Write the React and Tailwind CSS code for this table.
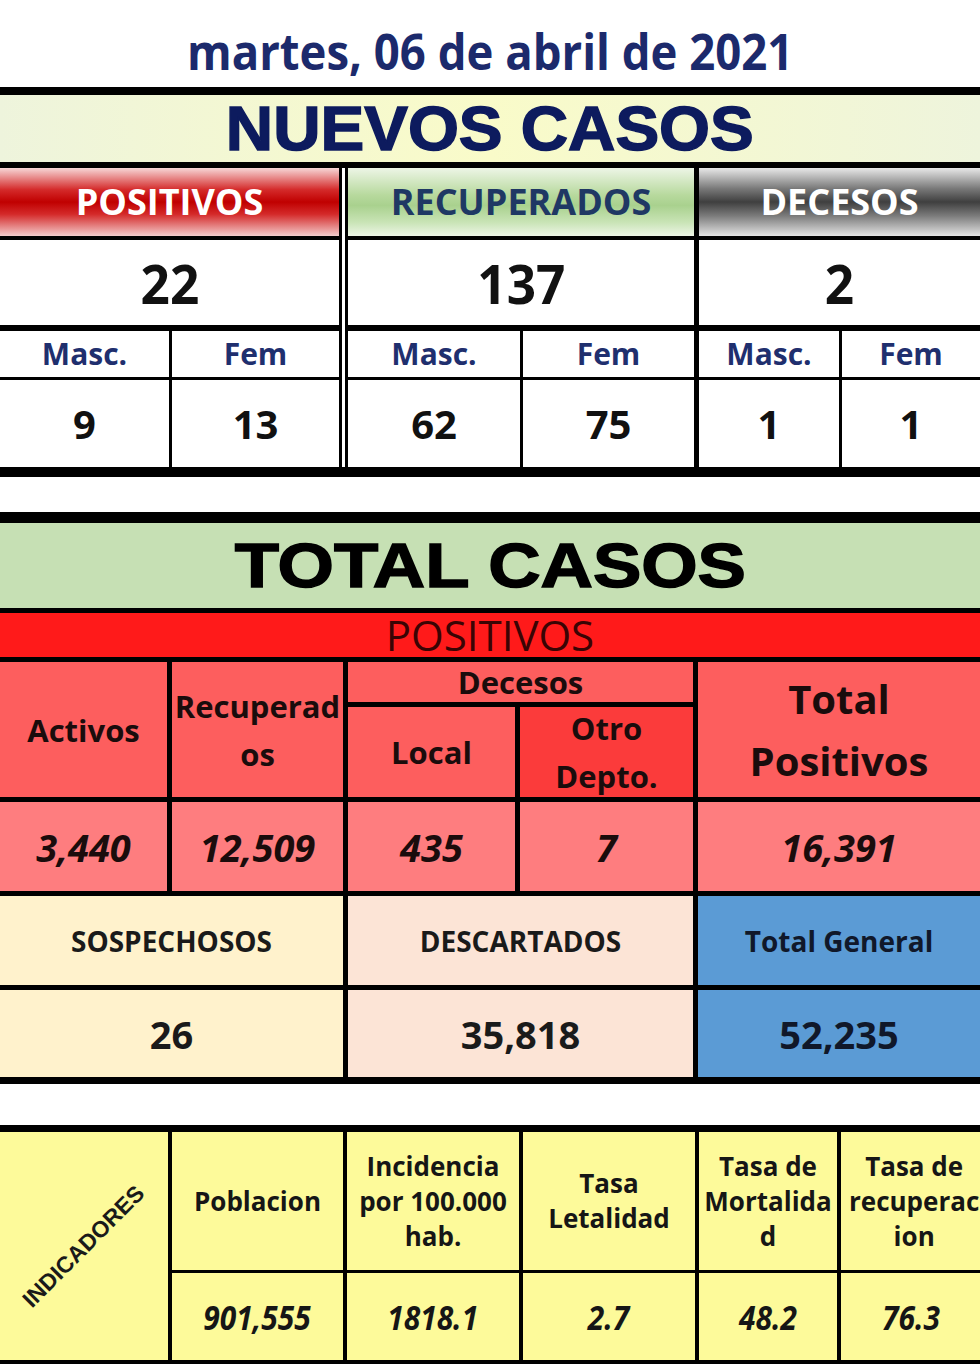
const Cell = ({ className = "", children }) => (
  <div className={`flex items-center justify-center text-center ${className}`}>{children}</div>
);

function NewGroup({ width, cols, head, headBg, headText, total, a, b }) {
  return (
    <div className={`flex flex-col ${width}`}>
      <Cell className={`h-[68px] ${headBg}`}>
        <span className={`text-[36px] font-bold leading-none ${headText}`}>{head}</span>
      </Cell>
      <Cell className="mt-[4px] h-[85px] bg-white">
        <span className="inline-block text-[54px] font-bold leading-none text-[#111] scale-x-[0.95]">{total}</span>
      </Cell>
      <div className={`mt-[6px] grid h-[46px] gap-x-[3px] ${cols}`}>
        <Cell className="bg-white">
          <span className="text-[30px] font-bold leading-none text-[#1f2f6e]">Masc.</span>
        </Cell>
        <Cell className="bg-white">
          <span className="text-[30px] font-bold leading-none text-[#1f2f6e]">Fem</span>
        </Cell>
      </div>
      <div className={`mt-[3px] grid h-[87px] gap-x-[3px] ${cols}`}>
        <Cell className="bg-white">
          <span className="text-[40px] font-bold leading-none text-[#111]">{a}</span>
        </Cell>
        <Cell className="bg-white">
          <span className="text-[40px] font-bold leading-none text-[#111]">{b}</span>
        </Cell>
      </div>
    </div>
  );
}

const redHead = "text-[31px] font-bold leading-[48px] text-[#1a0c0c]";
const redVal = "text-[38px] font-bold italic leading-none text-[#1a0c0c]";
const ind = "text-[26px] font-bold leading-[35px] text-[#161616]";
const indVal = "inline-block text-[34px] font-bold italic leading-none text-[#161616] scale-x-[0.88]";

export default function App() {
  return (
    <div className="h-[1364px] w-[980px] overflow-hidden bg-white font-['Open_Sans',sans-serif]">
      {/* date */}
      <div className="flex h-[87px] items-center justify-center pt-[14px]">
        <span className="inline-block scale-x-[0.91] text-[50px] font-bold leading-none text-[#1c2a6c]">
          martes, 06 de abril de 2021
        </span>
      </div>

      {/* nuevos casos */}
      <div className="bg-black pb-[10px] pt-[8px]">
        <Cell className="h-[67px] bg-[linear-gradient(to_right,#eef4dc,#f9fbc9_50%,#eef4dc)]">
          <span className="inline-block scale-x-[1.04] font-['Liberation_Sans',sans-serif] text-[63px] font-bold leading-none text-[#0d1b5e] [-webkit-text-stroke:1.5px_#0d1b5e]">
            NUEVOS CASOS
          </span>
        </Cell>
        <div className="mt-[6px] flex">
          <NewGroup
            width="w-[339px]"
            cols="grid-cols-[169px_1fr]"
            head="POSITIVOS"
            headBg="bg-[linear-gradient(to_bottom,#f7d6d6_0%,#d42a2a_32%,#c00000_50%,#d42a2a_68%,#f3cccc_100%)]"
            headText="text-white"
            total="22"
            a="9"
            b="13"
          />
          <div className="w-[9px] border-x-[3px] border-black bg-white" />
          <NewGroup
            width="w-[346px]"
            cols="grid-cols-[172px_1fr]"
            head="RECUPERADOS"
            headBg="bg-[linear-gradient(to_bottom,#edf5e6_0%,#b7d99d_40%,#a9d18e_55%,#c9e4b6_80%,#edf5e6_100%)]"
            headText="text-[#1f3864]"
            total="137"
            a="62"
            b="75"
          />
          <div className="w-[5px]" />
          <NewGroup
            width="flex-1"
            cols="grid-cols-[140px_1fr]"
            head="DECESOS"
            headBg="bg-[linear-gradient(to_bottom,#e8e8e8_0%,#7a7a7a_30%,#3f3f3f_50%,#7a7a7a_70%,#e4e4e4_100%)]"
            headText="text-white"
            total="2"
            a="1"
            b="1"
          />
        </div>
      </div>

      {/* total casos */}
      <div className="mt-[35px] bg-black pb-[7px] pt-[11px]">
        <Cell className="h-[85px] bg-[#c6e0b4]">
          <span className="inline-block scale-x-[1.15] font-['Liberation_Sans',sans-serif] text-[63px] font-bold leading-none text-black [-webkit-text-stroke:1.5px_#000]">
            TOTAL CASOS
          </span>
        </Cell>
        <Cell className="mt-[5px] h-[44px] bg-[#ff1a1a]">
          <span className="text-[42px] leading-none text-[#3a0404]">POSITIVOS</span>
        </Cell>
        <div className="mt-[5px] grid grid-cols-[167px_171px_167px_173px_1fr] grid-rows-[40px_90px_89px_89px_87px] gap-x-[5px] gap-y-[5px]">
          <Cell className="row-span-2 bg-[#fd5e5e]">
            <span className={redHead}>Activos</span>
          </Cell>
          <Cell className="row-span-2 bg-[#fd5e5e]">
            <span className={redHead}>
              Recuperad
              <br />
              os
            </span>
          </Cell>
          <Cell className="col-span-2 bg-[#fd5e5e]">
            <span className="text-[31px] font-bold leading-none text-[#1a0c0c]">Decesos</span>
          </Cell>
          <Cell className="row-span-2 bg-[#fd5e5e]">
            <span className="text-[40px] font-bold leading-[62px] text-[#1a0c0c]">
              Total
              <br />
              Positivos
            </span>
          </Cell>
          <Cell className="bg-[#fd5e5e]">
            <span className={redHead}>Local</span>
          </Cell>
          <Cell className="bg-[#fb3b3b]">
            <span className={redHead}>
              Otro
              <br />
              Depto.
            </span>
          </Cell>

          <Cell className="bg-[#fe7d7f]">
            <span className={redVal}>3,440</span>
          </Cell>
          <Cell className="bg-[#fe7d7f]">
            <span className={redVal}>12,509</span>
          </Cell>
          <Cell className="bg-[#fe7d7f]">
            <span className={redVal}>435</span>
          </Cell>
          <Cell className="bg-[#fe7d7f]">
            <span className={redVal}>7</span>
          </Cell>
          <Cell className="bg-[#fe7d7f]">
            <span className={redVal}>16,391</span>
          </Cell>

          <Cell className="col-span-2 bg-[#fff2cc]">
            <span className="text-[28px] font-bold leading-none text-[#1a1a1a]">SOSPECHOSOS</span>
          </Cell>
          <Cell className="col-span-2 bg-[#fce4d6]">
            <span className="text-[28px] font-bold leading-none text-[#1a1a1a]">DESCARTADOS</span>
          </Cell>
          <Cell className="bg-[#5b9bd5]">
            <span className="text-[28px] font-bold leading-none text-[#10182a]">Total General</span>
          </Cell>

          <Cell className="col-span-2 bg-[#fff2cc]">
            <span className="text-[38px] font-bold leading-none text-[#1a1a1a]">26</span>
          </Cell>
          <Cell className="col-span-2 bg-[#fce4d6]">
            <span className="text-[38px] font-bold leading-none text-[#1a1a1a]">35,818</span>
          </Cell>
          <Cell className="bg-[#5b9bd5]">
            <span className="text-[38px] font-bold leading-none text-[#10182a]">52,235</span>
          </Cell>
        </div>
      </div>

      {/* indicadores */}
      <div className="mt-[41px] bg-black pb-[4px] pt-[7px]">
        <div className="grid grid-cols-[168px_171px_172px_172px_138px_1fr] grid-rows-[138px_87px] gap-x-[4px] gap-y-[3px]">
          <Cell className="row-span-2 bg-[#fdfa9a]">
            <span className="inline-block -rotate-45 font-['Liberation_Sans',sans-serif] text-[23px] font-bold leading-none text-[#1a1a1a]">
              INDICADORES
            </span>
          </Cell>
          <Cell className="bg-[#fdfa9a]">
            <span className={ind}>Poblacion</span>
          </Cell>
          <Cell className="bg-[#fdfa9a]">
            <span className={ind}>
              Incidencia
              <br />
              por 100.000
              <br />
              hab.
            </span>
          </Cell>
          <Cell className="bg-[#fdfa9a]">
            <span className={ind}>
              Tasa
              <br />
              Letalidad
            </span>
          </Cell>
          <Cell className="bg-[#fdfa9a]">
            <span className={ind}>
              Tasa de
              <br />
              Mortalida
              <br />d
            </span>
          </Cell>
          <Cell className="justify-start overflow-hidden bg-[#fdfa9a] pl-[8px]">
            <span className={`${ind} whitespace-nowrap`}>
              Tasa de
              <br />
              recuperac
              <br />
              ion
            </span>
          </Cell>

          <Cell className="bg-[#fdfa9a]">
            <span className={indVal}>901,555</span>
          </Cell>
          <Cell className="bg-[#fdfa9a]">
            <span className={indVal}>1818.1</span>
          </Cell>
          <Cell className="bg-[#fdfa9a]">
            <span className={indVal}>2.7</span>
          </Cell>
          <Cell className="bg-[#fdfa9a]">
            <span className={indVal}>48.2</span>
          </Cell>
          <Cell className="bg-[#fdfa9a]">
            <span className={indVal}>76.3</span>
          </Cell>
        </div>
      </div>
    </div>
  );
}
